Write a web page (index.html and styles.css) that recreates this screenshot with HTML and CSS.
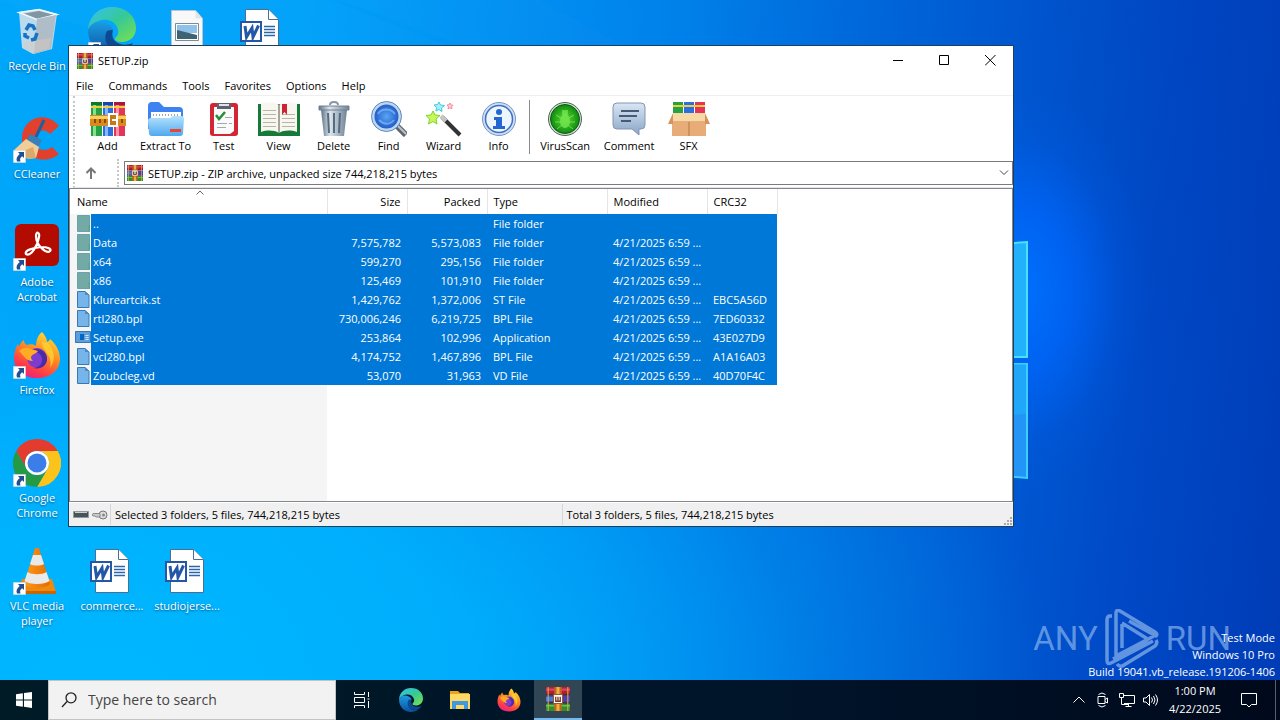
FILE: index.html
```html
<!DOCTYPE html>
<html lang="en">
<head>
<meta charset="utf-8">
<title>SETUP.zip</title>
<link rel="stylesheet" href="styles.css">
</head>
<body>
<svg class="sprite" aria-hidden="true">
  <defs>
    <linearGradient id="gEdgeA" x1="0" y1="0" x2="1" y2="1"><stop offset="0" stop-color="#35c1f1"/><stop offset=".5" stop-color="#36c996"/><stop offset="1" stop-color="#7be24b"/></linearGradient>
    <linearGradient id="gEdgeB" x1="0" y1="0" x2="0" y2="1"><stop offset="0" stop-color="#1b9de2"/><stop offset="1" stop-color="#0c4f9e"/></linearGradient>
    <linearGradient id="gFox" x1=".8" y1="0" x2=".3" y2="1"><stop offset="0" stop-color="#ffe23a"/><stop offset=".45" stop-color="#ff8a1f"/><stop offset=".8" stop-color="#ff3b47"/><stop offset="1" stop-color="#e9208a"/></linearGradient>
    <linearGradient id="gBlue" x1="0" y1="0" x2="0" y2="1"><stop offset="0" stop-color="#b5e3ff"/><stop offset="1" stop-color="#4fa8ee"/></linearGradient>
    <linearGradient id="gMetal" x1="0" y1="0" x2="1" y2="0"><stop offset="0" stop-color="#5f7386"/><stop offset=".35" stop-color="#dbe6ee"/><stop offset="1" stop-color="#6d8295"/></linearGradient>
    <linearGradient id="gBubble" x1="0" y1="0" x2="0" y2="1"><stop offset="0" stop-color="#d9e6f5"/><stop offset="1" stop-color="#8aa5c6"/></linearGradient>
    <radialGradient id="gLens"><stop offset="0" stop-color="#5aa5f5"/><stop offset="1" stop-color="#1b55c4"/></radialGradient>
    <radialGradient id="gVirus"><stop offset="0" stop-color="#5ee02c"/><stop offset="1" stop-color="#0f8a12"/></radialGradient>
    <linearGradient id="gCone" x1="0" y1="0" x2="1" y2="0"><stop offset="0" stop-color="#ff9a1c"/><stop offset="1" stop-color="#e56a00"/></linearGradient>
  </defs>
  <symbol id="rar" viewBox="0 0 16 16">
    <path fill="#b3202c" d="M0 0h16v5H0z"/><path fill="#4a3fae" d="M0 5.500h16v5H0z"/><path fill="#2f8f2f" d="M0 11h16v5H0z"/>
    <path fill="#d8456a" d="M0 1h16v1.500H0z"/><path fill="#3f7fd8" d="M0 6.500h7v3H0z"/><path fill="#69c04f" d="M0 12h16v1H0z"/>
    <path fill="#222" opacity=".5" d="M0 4.500h16v1H0zM0 10h16v1H0z"/>
    <path fill="#e8a840" d="M1 0h1v16H1zM14 0h1v16h-1z" opacity=".7"/>
    <path fill="#c5641f" d="M5.500 0h5v16h-5z"/><path fill="#f0b040" d="M7 0h2v16H7z"/>
    <path fill="#fff" stroke="#a0522a" stroke-width=".7" d="M5 5h6v6H5z"/><path fill="none" stroke="#7a3b20" stroke-width=".9" d="M6.500 6.500v3h3v-3M8 6.500v3"/>
  </symbol>
  <symbol id="edge" viewBox="0 0 48 48">
    <path fill="url(#gEdgeA)" d="M0 23C1 9 11 0 24 0c15 0 24 10 24 21 0 9-7 14-14 14-5 0-8-2-7-4 4-3 4-7 2-11-3-6-9-8-15-7C8 14 2 18 0 23z"/>
    <path fill="url(#gEdgeB)" d="M0 23c2-6 8-9 14-8 7 1 11 5 11 8-6 2-8 8-5 14 3 7 11 9 19 6-4 3-9 5-15 5C10 48 0 37 0 23z"/>
    <path fill="#0b4a92" d="M19 24c-5 10 2 21 15 20 5-1 9-4 11-8-7 3-15 2-19-3-2-3-2-6-1-10-2 0-4 0-6 1z"/>
  </symbol>
  <symbol id="firefox" viewBox="0 0 48 48">
    <path fill="url(#gFox)" d="M29 1c3 3 5 7 5 10 2-1 3-2 3-3 7 6 10 13 10 20 0 11-9 19-23 19S1 39 1 27c0-6 2-11 4-14l1 3c1-3 3-6 5-7 0 3 1 4 3 5 3-1 7-1 9 1 0-6 2-11 6-14z"/>
    <circle cx="24" cy="27" r="10" fill="#7e3bd0"/><path fill="#4a2aa6" d="M18 19c8-3 16 2 16 9s-7 11-13 9c6-1 9-5 8-10-1-4-5-7-11-8z"/>
    <path fill="#ffab24" d="M6 20c4-4 9-4 12-2 3 1 5 1 7 2-2 3-6 3-7 6 0 2 1 3 2 4-7 0-9-5-14-10z"/>
    <path fill="#ffd233" opacity=".8" d="M34 11c8 8 9 18 3 26 1-5 1-9-2-13-3-5-6-8-6-14 1 2 3 2 5 1z"/>
  </symbol>
  <symbol id="word" viewBox="0 0 40 44">
    <path fill="#fff" stroke="#4a6f96" d="M5.500.5h23l10 10v33h-33z"/><path fill="#fff" stroke="#4a6f96" d="M28.500.5v10h10"/>
    <path fill="none" stroke="#2b66ad" stroke-width="1.300" d="M24 17.500h11M24 20.500h11M24 23.500h11M24 26.500h11"/>
    <path fill="#fff" stroke="#2458a6" stroke-width="2" d="M1 13h20v19H1z"/>
    <path fill="none" stroke="#2458a6" stroke-width="3" d="M5 17l1.500 11 5.500-9 1 9 5.500-11.500"/>
  </symbol>
  <symbol id="link" viewBox="0 0 13 13"><path fill="#fff" stroke="#b7c9d6" stroke-width=".5" d="M.3.300h12.400v12.400H.3z"/><path fill="#234f91" d="M5 2h6v6L9.200 6.300C7 8 6.700 9 7.500 11.500H4C2.800 8.500 4 6 6.700 3.900z"/></symbol>
  <symbol id="folder" viewBox="0 0 14 17"><path fill="#74aaa6" stroke="#5794a5" stroke-width=".8" d="M1.500.500h12v16h-12z"/><path fill="#5ca28a" d="M12.500 10H14v6.500h-1.500z"/></symbol>
  <symbol id="file" viewBox="0 0 14 17"><path fill="#76b5ea" stroke="#3a78b5" d="M1.500.5H9L13 4v12.500H1.500z"/><path fill="#4d8ac7" d="M9 .5L13 4H9z"/></symbol>
  <symbol id="exe" viewBox="0 0 16 13"><path fill="#5e9edb" stroke="#3476ba" d="M.5.500h15v11H.5z"/><path fill="#0067c8" d="M5 3h4v6H5z"/><path stroke="#d2e8fb" d="M10.500 4.500h3M10.500 6.500h3M10.500 8.500h3"/></symbol>
</svg>

<main class="desktop">
  <svg class="wallpaper" viewBox="0 0 1280 680" preserveAspectRatio="none" aria-hidden="true">
    <path fill="#fff" opacity=".015" d="M0 0h330l620 240v60zM340 0h200l420 230z"/>
    <path fill="#22b1fb" stroke="#46e2ff" stroke-width="2" d="M900 252l127-10v115H900z"/>
    <path fill="#2295f7" stroke="#3bcfff" stroke-width="2" d="M900 364h127v114l-127-12z"/>
    <path fill="#22b4fb" opacity=".6" d="M900 364h126v50l-126 6z"/>
  </svg>

  <div class="shortcuts">
    <button class="shortcut"><span class="pic"><svg viewBox="0 0 48 48"><path fill="#cfe0ea" d="M6 5l20-3 18 5-5 35-19 5-11-6z" opacity=".9"/><path fill="#8295a3" d="M9 7l17-3 15 4-18 4z"/><path fill="none" stroke="#eff7fb" stroke-width="1.500" d="M6 5.500l20-3 18 5-20 5z"/><path fill="#aebdc8" d="M24 12l19-4-5 34-17 5z"/><path fill="#d9c9bd" opacity=".5" d="M11 35l27-4-2 11-16 4-9-5z"/><path fill="none" stroke="#1572c4" stroke-width="3.500" d="M13 23l3-5 4 1 2 4M24 26l-2 6-4 1M16 31l-4-2v-3"/></svg></span>Recycle Bin</button>
    <button class="shortcut"><span class="pic"><svg viewBox="0 0 48 48"><path fill="#e0402c" d="M46 11l-9 8c-5-6-15-4-16 5-1 10 10 14 18 8l7 7c-12 11-35 6-37-14C8 3 33-6 46 11z"/><path stroke="#1f5f9f" stroke-width="3" d="M31 5l-9 19"/><path fill="#3980b8" d="M17 19l12 6-4 8-12-7z"/><path fill="#f1cd98" d="M13 24l13 8-3 11-8 1-14-9z"/><path fill="#dba96a" d="M8 37l12-5 3 11-8 1z"/></svg><svg class="arrow"><use href="#link"/></svg></span>CCleaner</button>
    <button class="shortcut"><span class="pic"><svg viewBox="0 0 48 48"><rect x="2" y="1" width="44" height="42" rx="6" fill="#b30b00"/><path fill="none" stroke="#fff" stroke-width="2.200" d="M13 31c-2-4 8-6 15-7 7 0 11 2 9 4-3 3-14-5-14-15 0-5 4-4 3 1-1 8-8 20-13 17z"/></svg><svg class="arrow"><use href="#link"/></svg></span>Adobe Acrobat</button>
    <button class="shortcut"><span class="pic"><svg><use href="#firefox"/></svg><svg class="arrow"><use href="#link"/></svg></span>Firefox</button>
    <button class="shortcut"><span class="pic"><svg viewBox="0 0 48 48"><path fill="#e33b2e" d="M24 12h20.800A24 24 0 0 0 3.200 12l10.400 18A12 12 0 0 1 24 12z"/><path fill="#fcc41b" d="M24 12h20.800A24 24 0 0 1 24 48l10.400-18A12 12 0 0 0 24 12z"/><path fill="#249a46" d="M13.600 30L3.200 12A24 24 0 0 0 24 48l10.400-18a12 12 0 0 1-20.800 0z"/><circle cx="24" cy="24" r="12" fill="#fff"/><circle cx="24" cy="24" r="9.500" fill="#3b7de9"/></svg><svg class="arrow"><use href="#link"/></svg></span>Google Chrome</button>
    <button class="shortcut"><span class="pic"><svg viewBox="0 0 48 48"><path fill="#f08a0e" d="M9 32h30l4 13H5z"/><path fill="#c96503" d="M5 44h38v3H5z"/><path fill="url(#gCone)" d="M22 1h4l11 36c-4 5-22 5-26 0z"/><path fill="#e9e9e9" d="M20 8h8l3 9c-3 2-11 2-14 0zM14.500 25c4 3 15 3 19 0l3 9c-5 4-20 4-25 0z"/></svg><svg class="arrow"><use href="#link"/></svg></span>VLC media player</button>
    <button class="shortcut col2 row1" aria-label="Microsoft Edge"><span class="pic"><svg><use href="#edge"/></svg><svg class="arrow"><use href="#link"/></svg></span></button>
    <button class="shortcut col2 row6"><span class="pic doc"><svg><use href="#word"/></svg></span>commerce...</button>
    <button class="shortcut col3 row1" aria-label="Picture"><span class="pic"><svg viewBox="0 0 48 48"><path fill="#f8f8f8" stroke="#b9c6cf" d="M8.500 3.500h24l7 8v36h-31z"/><path fill="#dfe6ea" d="M32.500 3.500v8h7z"/><path fill="#fff" stroke="#7d8b94" d="M12.500 16.500h23v17h-23z"/><path fill="#8fc1ea" d="M14 18h20v8H14z"/><path fill="#3e6275" d="M14 23l8 2 12 3v4H14z"/></svg></span></button>
    <button class="shortcut col3 row6"><span class="pic doc"><svg><use href="#word"/></svg></span>studiojerse...</button>
    <button class="shortcut col4 row1" aria-label="Document"><span class="pic doc"><svg><use href="#word"/></svg></span></button>
  </div>

  <section class="window">
    <header class="titlebar">
      <svg class="small"><use href="#rar"/></svg>
      <h1>SETUP.zip</h1>
      <button aria-label="Minimize"><svg viewBox="0 0 11 11"><path d="M0 5.500h10"/></svg></button>
      <button aria-label="Maximize"><svg viewBox="0 0 11 11"><path d="M.5.500h9v9h-9z"/></svg></button>
      <button aria-label="Close"><svg viewBox="0 0 11 11"><path d="M0 0l10.500 10.500M10.500 0L0 10.500"/></svg></button>
    </header>
    <nav class="menu">
      <button>File</button><button>Commands</button><button>Tools</button><button>Favorites</button><button>Options</button><button>Help</button>
    </nav>
    <div class="toolbar">
      <button><svg viewBox="0 0 36 36"><path fill="#25a244" d="M1 2h11v33H1z"/><path fill="#2b6fe0" d="M13 2h10v33H13z"/><path fill="#e33459" d="M24 2h11v33H24z"/><path fill="#86e08d" d="M3 2h3v33H3z"/><path fill="#84b8ff" d="M15 2h3v33h-3z"/><path fill="#ff93a5" d="M26 2h3v33h-3z"/><path fill="#0c7a2c" d="M1 1h11v3H1z"/><path fill="#1a45a0" d="M13 1h10v3H13z"/><path fill="#a5173c" d="M24 1h11v3H24z"/><path fill="#f2cf3a" d="M1 5h11v2H1zM13 5h10v2H13zM24 5h11v2H24z"/><path fill="#d98a1c" d="M0 14h36v11H0z"/><path fill="#ffcf5d" d="M0 15h36v3H0z"/><path fill="#c47a18" stroke="#fff" stroke-width="2" d="M19 13h8v12h-8z"/><path stroke="#fff" stroke-width="2" d="M22 19h5"/><path fill="#8a4c0c" d="M4 18h2v4H4zM9 18h2v4H9zM14 18h2v4h-2zM31 18h2v4h-2z"/></svg>Add</button>
      <button><svg viewBox="0 0 36 36"><path fill="#3c82f0" d="M0 5a4 4 0 0 1 4-4h7l5 5h15a4 4 0 0 1 4 4v18H0z"/><path fill="#fff" d="M3 11h30v9H3z"/><path stroke="#9aa8b8" stroke-width="2" stroke-dasharray="1 2" d="M5 14h26"/><path fill="url(#gBlue)" d="M0 20a3 3 0 0 1 3-3h19l3-2h8a3 3 0 0 1 3 3l-1 14a3 3 0 0 1-3 3H4a3 3 0 0 1-3-3z"/><path fill="#e8472f" d="M22 28h11v3H22z"/></svg>Extract To</button>
      <button><svg viewBox="0 0 36 36"><rect x="4" y="2" width="28" height="33" rx="3" fill="#d32634"/><path fill="#fafafa" d="M8 6h20v24l-4 3H8z"/><path fill="#5c6470" d="M11 2h14v6H11z"/><path fill="#e2e5e8" d="M13 3h10v2H13z"/><path fill="none" stroke="#258b36" stroke-width="2.500" d="M10 14l3 4 6-7"/><path stroke="#a4a8ad" d="M19 16.500h7M11 22.500h10M11 26.500h9M23 22.500h3"/></svg>Test</button>
      <button><svg class="book" viewBox="0 0 42 36"><path fill="#16793a" d="M0 3h42v32H0z"/><path fill="#f7f6ef" d="M3 3c6-2 13-2 18 1 5-3 12-3 18-1v28c-6-2-13-2-18 1-5-3-12-3-18-1z"/><path fill="none" stroke="#b7b5a9" d="M5 9.500h13M5 13.500h13M5 17.500h13M5 21.500h13M5 25.500h13M24 17.500h13M24 21.500h13M24 25.500h13M24 13.500h13"/><path stroke="#8d8a7e" stroke-width="1.500" d="M21 4v28"/><path fill="#cf2335" d="M24 3h5v11l-2.500-3-2.500 3z"/></svg>View</button>
      <button><svg viewBox="0 0 36 36"><path fill="url(#gMetal)" d="M5 9h26l-3 26H8z"/><path stroke="#586b7d" stroke-width="2" d="M12 12l1 20M18 12v20M24 12l-1 20"/><path fill="url(#gMetal)" stroke="#718292" d="M3 5h30v4H3z"/><path fill="none" stroke="#8797a5" stroke-width="2" d="M14 4c0-4 8-4 8 0"/></svg>Delete</button>
      <button><svg viewBox="0 0 36 36"><path stroke="#60666e" stroke-width="6" d="M26 25l9 9"/><path stroke="#bcc3ca" stroke-width="2" d="M26 24l9 9"/><circle cx="15.500" cy="15.500" r="13.500" fill="url(#gLens)" stroke="#bdd7f1" stroke-width="3"/><circle cx="15.500" cy="15.500" r="15" fill="none" stroke="#5c88ba"/><path fill="none" stroke="#8ec6ff" opacity=".6" stroke-width="2" d="M7 13c3-6 13-6 17 0M8 19c5 5 11 5 15 0"/></svg>Find</button>
      <button><svg viewBox="0 0 36 36"><path stroke="#333" stroke-width="4" d="M16 16l18 18"/><path stroke="#c5c5c5" stroke-width="4" d="M15 15l5 5"/><path fill="#c9f75b" stroke="#7ad62c" d="M7 10l2 4 5 .5-4 3.500 1 5-4-2.500L2.500 23l1-5L0 14.500l5-.5z"/><path fill="#a6effa" stroke="#3dcbe2" d="M13 1l1.500 3 4 .5-3 2.500.5 3.500-3-2-3 1.500.5-3.500L8 4l3.500-.5z"/><path fill="#ffd1d8" stroke="#f27687" stroke-width=".8" d="M24 2l1 2 2 .3-1.500 1.500.5 2-2-1-2 1 .5-2L21 4l2-.2z"/></svg>Wizard</button>
      <button><svg viewBox="0 0 36 36"><circle cx="18" cy="18" r="16.500" fill="#cddff5" stroke="#7895c4"/><circle cx="18" cy="18" r="13.500" fill="#edf6ff" stroke="#3f6fc1" stroke-width="1.500"/><circle cx="18" cy="11" r="3" fill="#2467d3"/><path fill="#2467d3" d="M13 16h8v9h3v3H12v-3h3v-6h-2z"/></svg>Info</button>
      <span class="divider"></span>
      <button class="wide"><svg viewBox="0 0 36 36"><circle cx="18" cy="18" r="16.500" fill="#d5dcd5" stroke="#4b6650"/><circle cx="18" cy="18" r="14.500" fill="url(#gVirus)" stroke="#0d5a17"/><path fill="none" stroke="#8cf06a" opacity=".7" d="M9 14l5 3M27 14l-5 3M8 21h6M28 21h-6M10 28l5-4M26 28l-5-4M15 9l2 2M21 9l-2 2"/><ellipse cx="18" cy="20" rx="5" ry="7" fill="#74e653" opacity=".8"/><circle cx="18" cy="12" r="3" fill="#74e653" opacity=".8"/></svg>VirusScan</button>
      <button class="wide"><svg viewBox="0 0 36 36"><path fill="url(#gBubble)" stroke="#8196b2" d="M6 2h24a4 4 0 0 1 4 4v18a4 4 0 0 1-4 4h-2v6l-7-6H6a4 4 0 0 1-4-4V6a4 4 0 0 1 4-4z"/><path stroke="#465a78" stroke-width="2" d="M10 10h18M8 15h18M10 20h10"/></svg>Comment</button>
      <button><svg class="book" viewBox="0 0 42 36"><path fill="#25a244" d="M5 1h10v14H5z"/><path fill="#2b6fe0" d="M16 1h10v14H16z"/><path fill="#e33459" d="M27 1h10v14H27z"/><path fill="#f2cf3a" d="M5 4h32v2H5z"/><path fill="#f6d9a5" d="M5 12h32v10H5z"/><path fill="#e8ac78" d="M4 20h34v15H4z"/><path fill="#d3945d" d="M5 12L0 23h5zM37 12l5 11h-5z"/><path stroke="#b87842" d="M21 21v14"/></svg>SFX</button>
    </div>
    <div class="address">
      <button class="up" aria-label="Up one level"><svg viewBox="0 0 12 12"><path d="M6 12V1.500M1.500 6L6 1.500 10.500 6"/></svg></button>
      <div class="combo">
        <svg class="small"><use href="#rar"/></svg>
        <select aria-label="Archive path"><option>SETUP.zip - ZIP archive, unpacked size 744,218,215 bytes</option></select>
        <svg class="caret" viewBox="0 0 10 6"><path d="M1 .5l4 4 4-4"/></svg>
      </div>
    </div>
    <div class="list">
      <table>
        <colgroup><col class="c-name"><col class="c-num"><col class="c-num"><col class="c-type"><col class="c-date"><col class="c-crc"></colgroup>
        <thead><tr><th>Name<svg class="sort" viewBox="0 0 8 5"><path d="M.5 4.500L4 1l3.500 3.500"/></svg></th><th class="num">Size</th><th class="num">Packed</th><th>Type</th><th>Modified</th><th>CRC32</th></tr></thead>
        <tbody>
          <tr><td><span><svg><use href="#folder"/></svg>..</span></td><td></td><td></td><td>File folder</td><td></td><td></td></tr>
          <tr><td><span><svg><use href="#folder"/></svg>Data</span></td><td>7,575,782</td><td>5,573,083</td><td>File folder</td><td>4/21/2025 6:59 ...</td><td></td></tr>
          <tr><td><span><svg><use href="#folder"/></svg>x64</span></td><td>599,270</td><td>295,156</td><td>File folder</td><td>4/21/2025 6:59 ...</td><td></td></tr>
          <tr><td><span><svg><use href="#folder"/></svg>x86</span></td><td>125,469</td><td>101,910</td><td>File folder</td><td>4/21/2025 6:59 ...</td><td></td></tr>
          <tr><td><span><svg><use href="#file"/></svg>Klureartcik.st</span></td><td>1,429,762</td><td>1,372,006</td><td>ST File</td><td>4/21/2025 6:59 ...</td><td>EBC5A56D</td></tr>
          <tr><td><span><svg><use href="#file"/></svg>rtl280.bpl</span></td><td>730,006,246</td><td>6,219,725</td><td>BPL File</td><td>4/21/2025 6:59 ...</td><td>7ED60332</td></tr>
          <tr><td><span><svg><use href="#exe"/></svg>Setup.exe</span></td><td>253,864</td><td>102,996</td><td>Application</td><td>4/21/2025 6:59 ...</td><td>43E027D9</td></tr>
          <tr><td><span><svg><use href="#file"/></svg>vcl280.bpl</span></td><td>4,174,752</td><td>1,467,896</td><td>BPL File</td><td>4/21/2025 6:59 ...</td><td>A1A16A03</td></tr>
          <tr><td><span><svg><use href="#file"/></svg>Zoubcleg.vd</span></td><td>53,070</td><td>31,963</td><td>VD File</td><td>4/21/2025 6:59 ...</td><td>40D70F4C</td></tr>
        </tbody>
      </table>
    </div>
    <footer class="status">
      <div class="locks">
        <svg viewBox="0 0 16 12"><path fill="#4a5458" stroke="#93999b" d="M.5 2.500h15v6H.5z"/><path stroke="#c9d0d2" d="M2 3.500h12"/></svg>
        <svg viewBox="0 0 16 12"><circle cx="11" cy="6" r="4" fill="#ddd" stroke="#777"/><circle cx="11.500" cy="6" r="1.500" fill="#888"/><path fill="#c9c9c9" stroke="#777" stroke-width=".8" d="M8 4.500H1L0 6l1 1h2l1 1h4z"/></svg>
      </div>
      <span>Selected 3 folders, 5 files, 744,218,215 bytes</span>
      <span>Total 3 folders, 5 files, 744,218,215 bytes</span>
      <svg class="grip" viewBox="0 0 9 9"><path fill="#aaa" d="M6 0h2v2H6zM6 3h2v2H6zM3 3h2v2H3zM6 6h2v2H6zM3 6h2v2H3zM0 6h2v2H0z"/></svg>
    </footer>
  </section>

  <div class="watermark">
    <span>ANY</span>
    <svg viewBox="0 0 54 60"><path fill="none" stroke="currentColor" stroke-width="3.500" stroke-linejoin="round" d="M7 7H5Q2 7 2 11v40q0 5 4 3l42-22M11 4q0-4 4-2l35 21q3 2 1 4L24 12M11 4v43l38-20M17 15v24M17 14l24 15q2 2 0 3L8 50M12 55q3 4 7 1l31-19q3-3 1-6"/></svg>
    <span>RUN</span>
  </div>
  <p class="build">Test Mode<br>Windows 10 Pro<br>Build 19041.vb_release.191206-1406</p>
</main>

<footer class="taskbar">
  <button class="task" aria-label="Start"><svg class="win" viewBox="0 0 14 14"><path fill="#fff" d="M0 2l6-1v5.500H0zM7 .9L14 0v6.500H7zM0 7.500h6V13l-6-1zM7 7.500h7V14l-7-1z"/></svg></button>
  <label class="search"><svg viewBox="0 0 16 16"><path d="M1 15l5-5.500"/><circle cx="10" cy="5.800" r="5"/></svg><input type="text" placeholder="Type here to search"></label>
  <button class="task" aria-label="Task View"><svg class="view" viewBox="0 0 16 16"><path d="M.5 0v2.500h10V0M.5 5.500h10v5H.5zM.5 16v-2.500h10V16M14.500 0v5M14.500 9v7M13.500 7h2"/></svg></button>
  <button class="task" aria-label="Edge"><svg><use href="#edge"/></svg></button>
  <button class="task" aria-label="File Explorer"><svg viewBox="0 0 24 24"><path fill="#e8a416" d="M2 3h8l2 2h9v4H2z"/><path fill="#ffd765" d="M2 6h20v15H2z"/><path fill="#3c9be0" d="M4 13h16v8h-4v-4H8v4H4z"/></svg></button>
  <button class="task" aria-label="Firefox"><svg><use href="#firefox"/></svg></button>
  <button class="task active" aria-label="WinRAR"><svg><use href="#rar"/></svg></button>
  <div class="tray">
    <button aria-label="Show hidden icons"><svg viewBox="0 0 16 16"><path d="M2.500 10.500L8 5l5.500 5.500"/></svg></button>
    <button aria-label="Meet now"><svg viewBox="0 0 16 16"><path d="M3 4.500h7v7H3zM10 7.500l2.500-1.500v5L10 9.500M3.500 2.500q3.500-3 7 0M3.500 13.500q3.500 3 7 0"/></svg></button>
    <button aria-label="Network"><svg viewBox="0 0 16 16"><path d="M5 3.500h10.500v8H5M.5 1.500h4v4h-4zM2.500 5.500v7H9M9.500 11.500v3M6.500 14.500h6"/></svg></button>
    <button aria-label="Volume"><svg viewBox="0 0 16 16"><path d="M.5 6v4h2.500l3.500 3.500v-11L3 6zM8.500 5.500q2 2.500 0 5M10.500 4q3 4 0 8M12.500 2.500q4 5.500 0 11"/></svg></button>
    <time>1:00 PM<br>4/22/2025</time>
    <button class="note" aria-label="Notifications"><svg viewBox="0 0 16 16"><path d="M.5 1.500h15v11h-5L8 15l-2.500-2.500h-5z"/></svg></button>
    <button class="peek" aria-label="Show desktop"></button>
  </div>
</footer>
</body>
</html>
```
FILE: styles.css
```css
* { box-sizing: border-box; }
body {
  margin: 0;
  height: 100vh;
  display: flex;
  flex-direction: column;
  overflow: hidden;
  font: 11px/15px "Open Sans", "Noto Sans", sans-serif;
  color: #000;
}
button, select, input { font: inherit; color: inherit; border: 0; background: none; padding: 0; margin: 0; }
svg { display: block; flex: none; }
.sprite { position: absolute; width: 0; height: 0; }

/* Desktop */
.desktop {
  flex: 1;
  position: relative;
  min-height: 0;
  background:
    radial-gradient(ellipse 130px 200px at 1020px 290px, rgba(0, 114, 255, .95) 0%, rgba(0, 104, 255, .7) 40%, rgba(0, 96, 240, .2) 75%, transparent 100%),
    radial-gradient(ellipse 600px 420px at 100% 0, rgba(0, 62, 184, .35), transparent),
    linear-gradient(96deg, #00a6fa 0%, #00a2fa 22%, #0084ec 48%, #005cd4 76%, #0048c6 88%, #003cb6 100%);
}
.desktop::before {
  content: "";
  position: absolute;
  inset: 0;
  background: radial-gradient(ellipse 960px 460px at 100px 100%, #00b6ff 0%, rgba(0, 182, 255, .75) 40%, rgba(0, 170, 250, .25) 75%, transparent 100%);
}
.wallpaper { position: absolute; inset: 0; width: 100%; height: 100%; }
.shortcuts {
  position: relative;
  display: grid;
  grid-template: repeat(6, 108px) / repeat(4, 75px);
  grid-auto-flow: column;
  width: max-content;
}
.shortcut {
  display: flex;
  flex-direction: column;
  align-items: center;
  gap: 3px;
  padding: 7px 5px 0 4px;
  color: #fff;
  text-shadow: 0 1px 2px rgba(0, 40, 80, .7);
}
.col2 { grid-column: 2; }
.col3 { grid-column: 3; }
.col4 { grid-column: 4; }
.row1 { grid-row: 1; }
.row6 { grid-row: 6; }
.pic { position: relative; display: grid; place-items: center; width: 48px; height: 48px; flex: none; }
.pic svg { width: 48px; height: 48px; }
.pic.doc { justify-items: start; padding-left: 2px; }
.pic.doc svg { width: 40px; height: 44px; }
.pic svg.arrow { position: absolute; left: 0; bottom: 0; width: 13px; height: 13px; }

/* Archive window */
.window {
  position: absolute;
  top: 45px;
  left: 68px;
  right: 266px;
  bottom: 153px;
  display: flex;
  flex-direction: column;
  background: #fff;
  border: 1px solid #1c3f5c;
}
.small { width: 16px; height: 16px; }
.titlebar { display: flex; align-items: center; height: 29px; padding-left: 8px; }
.titlebar h1 { flex: 1; margin: 0 0 0 5px; font-size: 11px; font-weight: 400; }
.titlebar button { display: grid; place-items: center; width: 46px; height: 29px; }
.titlebar button svg { width: 11px; height: 11px; fill: none; stroke: #000; }
.menu { display: flex; gap: 15px; height: 21px; padding-left: 7px; border-bottom: 1px solid #efefef; }
.toolbar { display: flex; height: 63px; margin-left: 4px; padding-left: 5px; border-left: 2px dotted #c8c8c8; }
.toolbar button {
  display: flex;
  flex-direction: column;
  align-items: center;
  gap: 1px;
  min-width: 55px;
  padding: 5px 5px 0;
}
.toolbar button.wide { min-width: 64px; }
.toolbar svg { width: 36px; height: 36px; }
.toolbar svg.book { width: 42px; }
.divider { width: 1px; height: 54px; margin: 4px 3px 0; background: #8a8a8a; }
.address { display: flex; height: 29px; margin-left: 4px; border-left: 2px dotted #c8c8c8; border-bottom: 1px solid #e4e4e4; }
.up { width: 44px; padding-right: 10px; display: grid; place-items: center; border-right: 2px dotted #c8c8c8; }
.up svg { width: 12px; height: 12px; fill: none; stroke: #777; stroke-width: 2; }
.combo { flex: 1; display: flex; align-items: center; margin: 2px 0 2px 5px; padding: 0 3px 0 2px; border: 1px solid #7a7a7a; }
.combo select { flex: 1; margin-left: 5px; appearance: none; outline: 0; }
.caret { width: 10px; height: 6px; fill: none; stroke: #444; }
.list {
  flex: 1;
  min-height: 0;
  border: 1px solid #828790;
  background: linear-gradient(#f5f5f5, #f5f5f5) 0 0 / 257px 100% no-repeat #fff;
}
table { width: 707px; table-layout: fixed; border-collapse: collapse; }
.c-name { width: 257px; }
.c-num { width: 80px; }
.c-type { width: 120px; }
.c-date { width: 100px; }
.c-crc { width: 70px; }
th, td { padding: 0 6px; text-align: left; font-weight: 400; white-space: nowrap; }
th { position: relative; height: 25px; background: #fff; border-right: 1px solid #e5e5e5; }
th:first-child { padding-left: 7px; }
.sort { position: absolute; top: 1px; left: 126px; width: 8px; height: 5px; fill: none; stroke: #666; }
td { height: 19px; background: #0078d7; color: #fff; }
td:nth-child(5) { padding-right: 2px; }
th.num, td:nth-child(2), td:nth-child(3) { text-align: right; }
td:first-child { padding-left: 5px; background: linear-gradient(#f5f5f5, #f5f5f5) 0 0 / 21px 100% no-repeat #0078d7; }
td span { display: flex; align-items: center; gap: 2px; }
td svg { width: 16px; height: 17px; }
.status { display: flex; align-items: center; height: 24px; background: #f0f0f0; border-top: 1px solid #fff; }
.locks { display: flex; gap: 3px; padding: 0 2px 0 4px; }
.locks svg { width: 16px; height: 12px; }
.status span { flex: 1; padding: 1px 0 0 4px; border-left: 1px solid #d7d7d7; line-height: 20px; }
.status .grip { margin-left: -9px; }
.grip { width: 9px; height: 9px; align-self: flex-end; }

/* Corner marks */
.watermark {
  position: absolute;
  right: 49px;
  bottom: 11px;
  display: flex;
  align-items: center;
  gap: 7px;
  color: rgba(150, 190, 240, .65);
  font: 33px/44px "Roboto", sans-serif;
}
.watermark svg { width: 54px; height: 60px; }
.build { position: absolute; right: 5px; bottom: 0; margin: 0; color: #fff; text-align: right; line-height: 17px; }

/* Taskbar */
.taskbar { display: flex; height: 40px; background: linear-gradient(90deg, #001a26, #00142a 60%, #00091c); color: #fff; }
.task { display: grid; place-items: center; width: 48px; margin-right: 1px; }
.task:first-child { margin-right: 0; }
.task svg { width: 24px; height: 24px; }
.task svg.win { width: 16px; height: 16px; }
.task svg.view { width: 16px; height: 16px; fill: none; stroke: #fff; }
.task.active { background: #304654; border-bottom: 2px solid #76b9ed; }
.search { display: flex; align-items: center; gap: 11px; width: 288px; padding-left: 12px; margin-right: 2px; background: #f2f2f2; border: 1px solid #c4c4c4; color: #333; }
.search svg { width: 16px; height: 16px; fill: none; stroke: #222; stroke-width: 1.3; }
.search input { flex: 1; min-width: 0; font-size: 14px; line-height: 20px; outline: 0; }
.search input::placeholder { color: #444; opacity: 1; }
.tray { display: flex; align-items: center; margin-left: auto; }
.tray button { display: grid; place-items: center; width: 24px; height: 40px; }
.tray svg { width: 16px; height: 16px; fill: none; stroke: #fff; }
.tray time { width: 60px; padding-left: 4px; text-align: center; line-height: 18px; }
.tray .note { width: 52px; }
.tray .peek { width: 5px; border-left: 1px solid #55616e; }
```
